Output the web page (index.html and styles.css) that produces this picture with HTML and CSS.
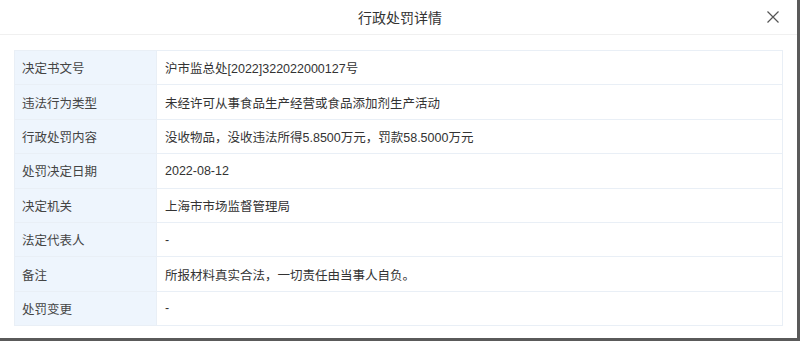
FILE: index.html
```html
<!DOCTYPE html>
<html lang="zh-CN">
<head>
<meta charset="utf-8">
<title>行政处罚详情</title>
<link rel="stylesheet" href="styles.css">
</head>
<body>
<div class="modal">
  <div class="modal-header">
    <span class="modal-title">行政处罚详情</span>
    <span class="modal-close" aria-label="关闭">
      <svg width="12" height="12" viewBox="0 0 12 12"><path d="M0.5 0.5 L11.5 11.5 M11.5 0.5 L0.5 11.5" stroke="#555" stroke-width="1.2" fill="none"/></svg>
    </span>
  </div>
  <div class="modal-body">
    <table class="detail">
      <tr><td class="label">决定书文号</td><td class="value">沪市监总处[2022]322022000127号</td></tr>
      <tr><td class="label">违法行为类型</td><td class="value">未经许可从事食品生产经营或食品添加剂生产活动</td></tr>
      <tr><td class="label">行政处罚内容</td><td class="value">没收物品，没收违法所得5.8500万元，罚款58.5000万元</td></tr>
      <tr><td class="label">处罚决定日期</td><td class="value">2022-08-12</td></tr>
      <tr><td class="label">决定机关</td><td class="value">上海市市场监督管理局</td></tr>
      <tr><td class="label">法定代表人</td><td class="value">-</td></tr>
      <tr><td class="label">备注</td><td class="value">所报材料真实合法，一切责任由当事人自负。</td></tr>
      <tr><td class="label">处罚变更</td><td class="value">-</td></tr>
    </table>
  </div>
</div>
</body>
</html>
```

FILE: styles.css
```css
html, body {
  margin: 0;
  padding: 0;
}
body {
  width: 800px;
  height: 341px;
  background: #5a5a5a;
  font-family: "Liberation Sans", "Noto Sans CJK SC", sans-serif;
  overflow: hidden;
}
.modal {
  width: 797px;
  height: 338px;
  background: #fff;
  box-sizing: border-box;
}
.modal-header {
  position: relative;
  height: 35px;
  border-bottom: 1px solid #f0f0f0;
  display: flex;
  align-items: center;
  justify-content: center;
  box-sizing: border-box;
}
.modal-title {
  font-size: 14px;
  color: #333;
  padding-left: 3px;
}
.modal-close {
  position: absolute;
  right: 18px;
  top: 11px;
  width: 12px;
  height: 12px;
  display: block;
}
.modal-close svg {
  display: block;
}
.modal-body {
  padding: 15px 14px 0 14px;
}
.detail {
  width: 769px;
  border-collapse: collapse;
  font-size: 12.5px;
  color: #333;
}
.detail td {
  border: 1px solid #e9eff6;
  height: 34.4px;
  padding: 0;
  box-sizing: border-box;
}
.detail .label {
  width: 142px;
  background: #eef5fd;
  padding-left: 7px;
  color: #444;
}
.detail .value {
  padding-left: 8px;
  background: #fff;
}
```
